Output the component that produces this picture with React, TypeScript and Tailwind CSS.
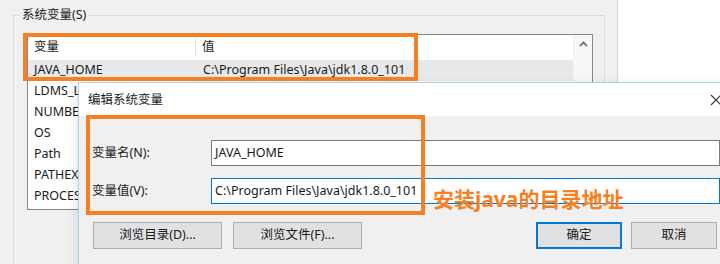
const font = "font-['Segoe_UI','Noto_Sans','Noto_Sans_CJK_SC',sans-serif]"

const rows = ['LDMS_LOCATION', 'NUMBER_OF_PROCESSORS', 'OS', 'Path', 'PATHEXT', 'PROCESSOR_ARCHITECTURE']

const Button = ({ label, primary }: { label: string; primary?: boolean }) => (
  <div
    className={
      'flex h-[27px] w-[86px] items-center justify-center bg-[#e1e1e1] text-[12.5px] text-[#1a1a1a] ' +
      (primary ? 'border-2 border-[#0078d7]' : 'border border-[#adadad]')
    }
  >
    {label}
  </div>
)

export default function App() {
  return (
    <div className={`relative flex h-[264px] w-[720px] overflow-hidden bg-white ${font}`}>
      {/* background window: 环境变量 */}
      <div className="h-full w-[618px] border-r border-[#cfcfcf] bg-[#f0f0f0] pl-[13px] pt-[15px]">
        <div className="relative h-[260px] w-[592px] border border-[#dcdcdc] pl-[13px] pt-[18px]">
          <span className="absolute -top-[9px] left-[6px] bg-[#f0f0f0] px-[2px] text-[12.5px] leading-[16px] text-[#1a1a1a]">
            系统变量(S)
          </span>
          <div className="flex h-[176px] w-[566px] border border-[#828790] bg-white">
            <div className="flex-1 text-[12.5px] text-[#1a1a1a]">
              <div className="flex h-[25px] items-center">
                <div className="w-[168px] border-r border-[#e5e5e5] pl-[6px]">变量</div>
                <div className="pl-[6px]">值</div>
              </div>
              <div className="flex h-[21px] items-center bg-[#e8e8e8]">
                <div className="w-[168px] pl-[6px]">JAVA_HOME</div>
                <div className="pl-[7px]">C:\Program Files\Java\jdk1.8.0_101</div>
              </div>
              {rows.map((r) => (
                <div key={r} className="flex h-[21px] items-center pl-[6px]">
                  {r}
                </div>
              ))}
            </div>
            <div className="w-[19px] border-l border-[#f0f0f0] bg-[#f7f7f7] pt-[6px] text-center">
              <svg width="9" height="6" viewBox="0 0 9 6" className="mx-auto">
                <path d="M1 5 L4.5 1.5 L8 5" fill="none" stroke="#606060" strokeWidth="1.6" />
              </svg>
            </div>
          </div>
        </div>
      </div>

      {/* dialog: 编辑系统变量 */}
      <div className="absolute left-[78px] top-[82px] h-[200px] w-[660px] border-l border-t border-[#a9d3e3] shadow-[-4px_0_8px_rgba(0,0,0,0.08)]">
        <div className="flex h-[33px] items-center justify-between bg-white pl-[9px] pr-[16px] text-[12.5px] text-[#1a1a1a]">
          <span className="pt-[2px]">编辑系统变量</span>
          <svg width="12" height="12" viewBox="0 0 12 12">
            <path d="M1 1 L11 11 M11 1 L1 11" stroke="#333" strokeWidth="1.1" />
          </svg>
        </div>
        <div className="h-full bg-[#f0f0f0] pl-[13px] pt-[24px] text-[12.5px] text-[#1a1a1a]">
          <div className="flex items-center">
            <div className="w-[119px]">变量名(N):</div>
            <div className="flex h-[26px] w-[509px] items-center border border-[#7a7a7a] bg-white pl-[3px]">JAVA_HOME</div>
          </div>
          <div className="mt-[12px] flex items-center">
            <div className="w-[119px]">变量值(V):</div>
            <div className="flex h-[26px] w-[509px] items-center border border-[#0078d7] bg-white pl-[3px]">
              C:\Program Files\Java\jdk1.8.0_101
            </div>
          </div>
          <div className="mt-[18px] flex w-[625px] gap-[11px] pl-[1px]">
            <div className="flex h-[27px] w-[129px] items-center justify-center border border-[#adadad] bg-[#e1e1e1]">
              浏览目录(D)...
            </div>
            <div className="flex h-[27px] w-[129px] items-center justify-center border border-[#adadad] bg-[#e1e1e1]">
              浏览文件(F)...
            </div>
            <div className="ml-auto flex gap-[9px]">
              <Button label="确定" primary />
              <Button label="取消" />
            </div>
          </div>
        </div>
      </div>

      {/* annotations */}
      <div className="absolute left-[23px] top-[33px] h-[48px] w-[395px] border-[4px] border-[#f58024]" />
      <div className="absolute left-[86px] top-[115px] h-[100px] w-[339px] border-[4px] border-[#f58024]" />
      <div className="absolute left-[433px] top-[186px] text-[21px] font-bold leading-[26px] text-[#f58024]">
        安装java的目录地址
      </div>
    </div>
  )
}
